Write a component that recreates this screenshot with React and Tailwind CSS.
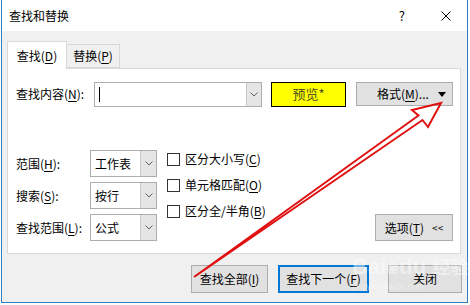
const font = { fontFamily: '"Noto Sans CJK SC", "Noto Sans", sans-serif' };

function Key({ children }) {
  return <span className="underline underline-offset-2">{children}</span>;
}

function Chevron() {
  return (
    <svg width="8" height="5" viewBox="0 0 8 5" className="text-[#606060]">
      <path d="M0.5 0.5 L4 4 L7.5 0.5" fill="none" stroke="currentColor" strokeWidth="1" />
    </svg>
  );
}

function Combo({ value, w, h }) {
  return (
    <div className={`flex border border-[#adadad] bg-white ${w} ${h}`}>
      <div className="flex-1 flex items-center pl-[4px] text-[12px] text-black">{value}</div>
      <div className="w-[16px] flex items-center justify-center bg-[#e5e5e5] border-l border-[#c9c9c9]">
        <Chevron />
      </div>
    </div>
  );
}

function Check({ children }) {
  return (
    <div className="flex items-center h-[26px] gap-[5px]">
      <div className="w-[13px] h-[13px] border border-[#333] bg-white" />
      <span className="text-[12px] text-black">{children}</span>
    </div>
  );
}

function Btn({ children, w, active }) {
  return (
    <div
      className={`${w} h-[28px] flex items-center justify-center text-[12px] text-black bg-[#e1e1e1] ${
        active ? "border-2 border-[#0078d7]" : "border border-[#adadad]"
      }`}
    >
      {children}
    </div>
  );
}

function App() {
  return (
    <div className="relative w-[470px] h-[305px] bg-white overflow-hidden" style={font}>
      <div className="ml-px w-[467px] h-[303px] flex flex-col border-x border-b border-[#2f7fc1]">
        {/* title bar */}
        <div className="h-[31px] flex items-center bg-white pl-[7px] pr-[16px]">
          <span className="text-[12px] text-black">查找和替换</span>
          <div className="ml-auto flex items-center gap-[36px]">
            <span className="text-[13px] text-black">?</span>
            <svg width="10" height="10" viewBox="0 0 10 10">
              <path d="M0.5 0.5 L9.5 9.5 M9.5 0.5 L0.5 9.5" stroke="#000" strokeWidth="1" />
            </svg>
          </div>
        </div>

        {/* body */}
        <div className="flex-1 bg-[#f0f0f0] pl-[5px] pt-[9px] flex flex-col">
          {/* tabs */}
          <div className="flex items-end h-[28px]">
            <div className="relative z-10 w-[60px] h-[28px] -mb-px bg-white border border-b-0 border-[#d9d9d9] flex items-center justify-center text-[12px] text-black">
              查找(<Key>D</Key>)
            </div>
            <div className="w-[53px] h-[24px] border border-l-0 border-[#d9d9d9] bg-[#f0f0f0] flex items-center justify-center text-[12px] text-black">
              替换(<Key>P</Key>)
            </div>
          </div>

          {/* panel */}
          <div className="w-[454px] h-[186px] bg-white border border-[#d9d9d9] pl-[8px] pt-[13px] flex flex-col">
            <div className="flex items-center h-[24px]">
              <span className="w-[78px] text-[12px] text-black">
                查找内容(<Key>N</Key>):
              </span>
              <div className="flex w-[168px] h-[25px] border border-[#adadad] bg-white">
                <div className="flex-1 flex items-center pl-[4px]">
                  <div className="w-px h-[15px] bg-black" />
                </div>
                <div className="w-[15px] flex items-center justify-center bg-[#e5e5e5] border-l border-[#c9c9c9]">
                  <Chevron />
                </div>
              </div>
              <div className="ml-[9px] w-[75px] h-[25px] bg-[#ffff00] border border-black flex items-center justify-center text-[13px] text-[#4f4f20]">
                预览*
              </div>
              <div className="ml-[10px] w-[97px] h-[24px] bg-[#e1e1e1] border border-[#adadad] flex items-center pl-[20px] pr-[6px] text-[12px] text-black">
                <span>
                  格式(<Key>M</Key>)...
                </span>
                <svg width="8" height="5" viewBox="0 0 8 5" className="ml-auto">
                  <path d="M0 0 L8 0 L4 5 Z" fill="#000" />
                </svg>
              </div>
            </div>

            <div className="flex mt-[44px]">
              <div className="flex flex-col gap-[5px]">
                {[
                  ["范围(", "H", "):", "工作表"],
                  ["搜索(", "S", "):", "按行"],
                  ["查找范围(", "L", "):", "公式"],
                ].map(([a, k, b, v]) => (
                  <div key={k} className="flex items-center">
                    <span className="w-[74px] text-[12px] text-black">
                      {a}
                      <Key>{k}</Key>
                      {b}
                    </span>
                    <Combo value={v} w="w-[67px]" h="h-[27px]" />
                  </div>
                ))}
              </div>

              <div className="ml-[10px] -mt-[4px] flex flex-col">
                <Check>
                  区分大小写(<Key>C</Key>)
                </Check>
                <Check>
                  单元格匹配(<Key>O</Key>)
                </Check>
                <Check>
                  区分全/半角(<Key>B</Key>)
                </Check>
              </div>

              <div className="ml-auto mr-[7px] self-end w-[78px] h-[27px] bg-[#e1e1e1] border border-[#adadad] flex items-center justify-center gap-[8px] text-[12px] text-black">
                <span>
                  选项(<Key>T</Key>)
                </span>
                <span className="text-[10px]">&lt;&lt;</span>
              </div>
            </div>
          </div>

          {/* bottom buttons */}
          <div className="flex mt-[11px] pl-[184px]">
            <Btn w="w-[77px]">
              查找全部(<Key>I</Key>)
            </Btn>
            <div className="ml-[10px]">
              <Btn w="w-[91px]" active>
                查找下一个(<Key>F</Key>)
              </Btn>
            </div>
            <div className="ml-[19px]">
              <Btn w="w-[74px]">关闭</Btn>
            </div>
          </div>
        </div>
      </div>

      {/* watermark */}
      <div className="absolute left-[352px] top-[254px] flex flex-col items-start pointer-events-none">
        <span className="text-[22px] leading-[24px] font-bold text-white/45" style={{ fontFamily: '"Liberation Sans", sans-serif' }}>
          Bai<span className="text-[16px]">❀</span>du <span style={font} className="text-[18px]">经验</span>
        </span>
        <span className="text-[9px] leading-[10px] text-white/40" style={{ fontFamily: '"Liberation Sans", sans-serif' }}>
          jingyan.baidu.com
        </span>
      </div>

      {/* red arrow */}
      <svg className="absolute inset-0 pointer-events-none" width="470" height="305" viewBox="0 0 470 305">
        <polygon
          points="441,103 412,110 418.5,115.5 194,277 422.5,120 428,127"
          fill="none"
          stroke="#e01010"
          strokeWidth="2"
          strokeLinejoin="miter"
        />
      </svg>
    </div>
  );
}

export default App;
